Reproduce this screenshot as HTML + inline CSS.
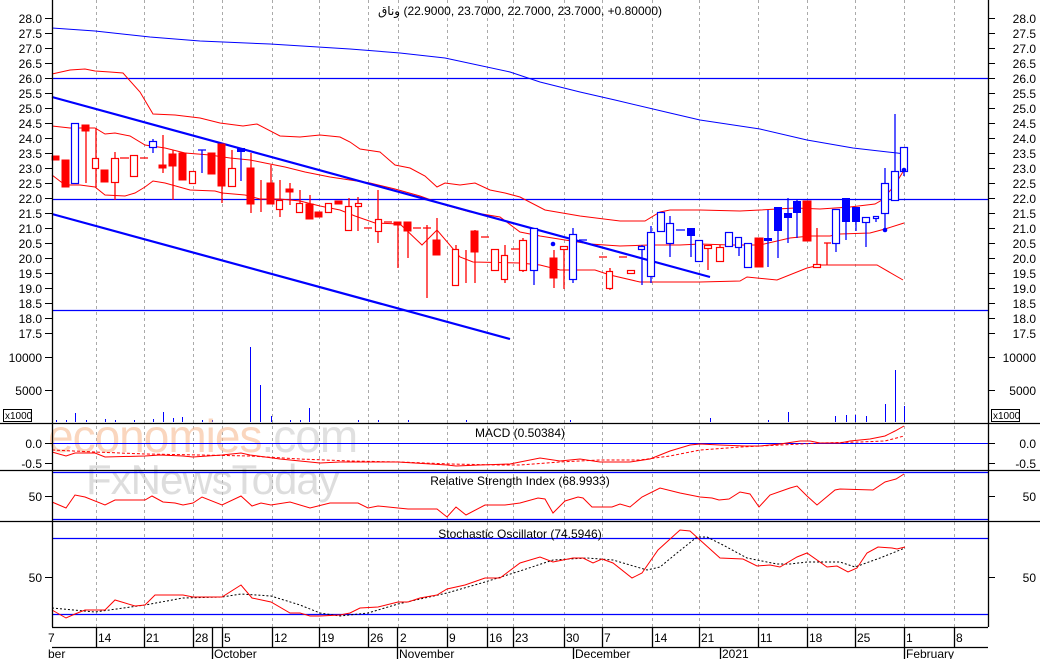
<!DOCTYPE html>
<html><head><meta charset="utf-8"><style>
html,body{margin:0;padding:0;background:#fff;width:1040px;height:659px;overflow:hidden}
svg{display:block}
text{font-family:"Liberation Sans","DejaVu Sans",sans-serif;font-size:12px;fill:#000}
</style></head><body>
<svg width="1040" height="659" viewBox="0 0 1040 659" xmlns="http://www.w3.org/2000/svg">
<!-- grid -->
<g stroke="#aaa" stroke-dasharray="3,3" stroke-width="1">
<path d="M96.5 0V627M144.5 0V627M193.5 0V627M222.5 0V627M272.5 0V627M319.5 0V627M368.5 0V627M398.5 0V627M447.5 0V627M487.5 0V627M513.5 0V627M564.5 0V627M602.5 0V627M652.5 0V627M699.5 0V627M758.5 0V627M807.5 0V627M855.5 0V627M904.5 0V627M954.5 0V627"/>
</g>
<!-- title -->
<text x="520" y="15" text-anchor="middle" direction="ltr">&#x200E;<tspan>وناق</tspan>&#x200E; (22.9000, 23.7000, 22.7000, 23.7000, +0.80000)</text>
<!-- horizontal levels -->
<g stroke="#00f" stroke-width="1.2">
<path d="M52 78.5H988M52 199.5H988M52 310.5H988"/>
</g>
<!-- MA -->
<polyline fill="none" stroke="#00f" stroke-width="1" points="52,28 95,31 150,37 200,41 270,44 350,49 400,53 445,58 510,72 540,82 580,92 615,100 670,113 700,120 760,129 807,140 853,148 897,153 905,154"/>
<!-- bollinger -->
<g fill="none" stroke="#f00" stroke-width="1">
<polyline points="52,74 70,70 85,69 95,71 110,72 123,73 140,92 153,114 175,115 200,118 220,123 243,126 257,124 280,136 300,137 320,135 340,137 350,142 360,149 380,152 395,165 410,168 425,176 437,187 445,183 460,185 475,183 490,190 505,193 520,197 545,210 580,216 620,221 645,221 660,212 670,210 700,210 740,211 760,210 795,208 820,209 850,207 875,204 882,200 895,185 904,170"/>
<polyline points="52,126 70,128 95,128 105,134 115,133 130,136 145,145 165,148 185,153 210,155 230,158 250,160 265,163 285,167 305,172 330,177 350,180 370,183 395,189 420,196 445,205 470,212 500,217 520,232 540,236 565,240 590,244 620,246 650,245 680,245 700,244 730,245 760,245 790,238 810,236 830,236 840,234 870,233 885,229 904,223"/>
<polyline points="52,175 65,185 80,185 95,187 105,195 125,196 135,193 145,187 153,181 165,183 190,190 215,191 222,193 245,195 260,199 280,199 300,201 320,206 340,210 355,216 375,223 400,224 422,245 437,230 460,257 473,262 520,263 540,265 560,270 595,270 610,275 640,282 700,282 740,281 747,277 777,280 807,268 820,265 877,265 903,280"/>
</g>
<!-- channel -->
<g stroke="#00f" stroke-width="2.2">
<path d="M52 97L710 277M52 214L510 339"/>
</g>
<!-- candles: red -->
<g stroke="#f00" stroke-width="1.3" fill="#f00">
<path d="M66 175V187M86 128V183M96 128V187M115 152V200M163 135V173M173 150V200M222 145V203M232 150V185M251 153V213M261 180V212M271 165V203M280 180V217M290 183V205M300 190V205M310 195V218M349 198V225M358 197V231M378 190V243M398 225V268M408 225V258M427 225V298M437 218V248M456 245V277M466 250V283M475 230V283M505 245V283M523 238V272M554 250V288M564 248V289M610 268V290M708 245V270M720 245V262M817 228V268M827 243V265"/>
</g>
<g fill="#f00" stroke="#f00" stroke-width="1">
<rect x="52" y="156" width="7" height="4"/><rect x="62" y="160" width="7" height="27"/><rect x="82" y="125" width="7" height="6"/><rect x="101" y="170" width="7" height="12"/><rect x="159" y="165" width="7" height="3"/><rect x="169" y="154" width="7" height="12"/><rect x="179" y="153" width="7" height="27"/><rect x="208" y="153" width="7" height="21"/><rect x="218" y="144" width="7" height="42"/><rect x="247" y="168" width="7" height="36"/><rect x="267" y="183" width="7" height="21"/><rect x="286" y="189" width="7" height="3"/><rect x="306" y="204" width="7" height="15"/><rect x="315" y="212" width="7" height="5"/><rect x="335" y="201" width="7" height="3"/><rect x="394" y="222" width="7" height="3"/><rect x="404" y="222" width="7" height="9"/><rect x="433" y="240" width="7" height="15"/><rect x="471" y="231" width="7" height="21"/><rect x="550" y="258" width="7" height="20"/><rect x="755" y="238" width="8" height="29"/><rect x="803" y="201" width="8" height="40"/>
</g>
<g fill="#fff" stroke="#f00" stroke-width="1.2">
<rect x="92.5" y="158.5" width="6" height="10"/><rect x="111.5" y="158.5" width="7" height="24"/><rect x="130.5" y="155.5" width="7" height="21"/><rect x="189.5" y="171.5" width="6" height="12"/><rect x="228.5" y="168.5" width="7" height="18"/><rect x="276.5" y="200.5" width="6" height="9"/><rect x="296.5" y="203.5" width="6" height="9"/><rect x="325.5" y="203.5" width="6" height="9"/><rect x="345.5" y="206.5" width="6" height="24"/><rect x="355.5" y="203.5" width="6" height="3"/><rect x="375.5" y="219.5" width="6" height="12"/><rect x="452.5" y="249.5" width="6" height="36"/><rect x="491.5" y="249.5" width="7" height="21"/><rect x="501.5" y="255.5" width="6" height="24"/><rect x="519.5" y="240.5" width="7" height="30"/><rect x="606.5" y="271.5" width="6" height="17"/><rect x="627.5" y="270.5" width="7" height="3"/><rect x="716.5" y="247.5" width="7" height="14"/><rect x="813.5" y="264.5" width="7" height="3"/><rect x="704.5" y="245.5" width="7" height="3"/><rect x="560.5" y="246.5" width="7" height="3"/>
<path d="M120 158H129M140 158H148M364 228H372M384 222H392M413 228H421M423 228H431M481 237H489M511 249H519M599 257H607M619 257H627M824 243H831"/>
</g>
<!-- candles: blue -->
<g stroke="#00f" stroke-width="1.3">
<path d="M153 139V153M202 150V173M241 150V181M534 228V285M573 228V283M642 245V285M651 226V283M670 216V257M691 228V257M699 240V261M739 237V256M748 243V267M768 210V267M778 207V258M788 198V243M797 199V238M836 209V252M846 198V240M856 207V231M866 217V247M876 217V222M885 168V230M895 114V200M904 147V176"/>
</g>
<g fill="#fff" stroke="#00f" stroke-width="1.2">
<rect x="71.5" y="123.5" width="7" height="60"/><rect x="149.5" y="141.5" width="7" height="6"/><rect x="530.5" y="228.5" width="7" height="42"/><rect x="569.5" y="234.5" width="7" height="45"/><rect x="638.5" y="246.5" width="6" height="3"/><rect x="647.5" y="232.5" width="7" height="44"/><rect x="657.5" y="212.5" width="7" height="19"/><rect x="666.5" y="223.5" width="7" height="20"/><rect x="695.5" y="240.5" width="7" height="21"/><rect x="725.5" y="232.5" width="7" height="14"/><rect x="735.5" y="237.5" width="6" height="10"/><rect x="744.5" y="243.5" width="7" height="24"/><rect x="832.5" y="209.5" width="7" height="34"/><rect x="862.5" y="217.5" width="7" height="5"/><rect x="873.5" y="216.5" width="5" height="2"/><rect x="881.5" y="183.5" width="7" height="30"/><rect x="891.5" y="171.5" width="7" height="29"/><rect x="900.5" y="147.5" width="7" height="24"/>
<path d="M198 150H206M579 240H587M676 230H685"/>
</g>
<g fill="#00f">
<rect x="237" y="148" width="8" height="4"/><rect x="687" y="228" width="8" height="8"/><rect x="764" y="238" width="8" height="3"/><rect x="774" y="207" width="8" height="24"/><rect x="784" y="213" width="8" height="5"/><rect x="793" y="201" width="8" height="12"/><rect x="842" y="198" width="8" height="24"/><rect x="852" y="207" width="8" height="15"/>
<circle cx="553" cy="244" r="2.3"/><circle cx="885" cy="230" r="2.3"/><circle cx="904" cy="170" r="2.3"/>
</g>
<!-- volume -->
<g stroke="#00f" stroke-width="1">
<path d="M75.5 422V413M163.5 422V412M182.5 422V417M250.5 422V347M260.5 422V385M271.5 422V416M309.5 422V408M56.5 422V420M66.5 422V420M86.5 422V420M105.5 422V419M115.5 422V420M134.5 422V420M153.5 422V419M173.5 422V418M202.5 422V420M212.5 422V420M290.5 422V420M300.5 422V420M358.5 422V420M378.5 422V420M408.5 422V420M466.5 422V420M570.5 422V420M710.5 422V418M768.5 422V420M788.5 422V412M835.5 422V416M846.5 422V415M855.5 422V415M866.5 422V416M885.5 422V404M895.5 422V370M904.5 422V406"/>
</g>
<!-- watermark -->
<text x="48" y="452" style="font-size:46px;fill:#f7b58a;opacity:.55;letter-spacing:-1px">economies<tspan style="fill:#c8c8c8">.com</tspan></text>
<text x="86" y="494" style="font-size:42px;fill:#bdbdbd;opacity:.5;letter-spacing:-1px">FxNewsToday</text>
<!-- MACD -->
<path d="M52 443.5H988" stroke="#00f" stroke-width="1"/>
<polyline fill="none" stroke="#f00" stroke-width="1" points="52,452 66,456 75,453 95,453 105,457 145,456 160,455 183,456 193,457 222,455 241,453 250,455 280,459 300,461 320,463 340,462 368,462 398,462 447,465 456,466 480,465 510,464 520,462 540,458 560,461 580,459 600,462 630,462 650,459 670,451 690,445 700,444 720,445 745,446 760,446 780,444 800,441 810,441 820,443 840,443 850,441 870,439 885,436 895,431 904,426"/>
<polyline fill="none" stroke="#f00" stroke-width="1" stroke-dasharray="3,2" points="52,450 95,452 145,454 200,455 250,456 300,459 350,461 400,462 450,464 500,465 520,465 560,462 600,460 640,460 670,456 700,450 740,447 780,445 820,443 860,442 885,441 904,436"/>
<text x="520" y="437" text-anchor="middle">MACD (0.50384)</text>
<!-- RSI -->
<path d="M52 472.5H988M52 519.5H988" stroke="#00f" stroke-width="1.2"/>
<polyline fill="none" stroke="#f00" stroke-width="1" points="52,502 66,508 75,495 85,497 105,505 115,500 145,500 152,496 163,502 175,503 183,505 193,503 202,497 222,505 241,496 252,506 261,503 271,505 290,502 310,508 330,503 350,503 358,503 368,508 378,506 398,508 408,509 437,509 447,517 456,507 466,515 485,505 505,505 520,503 538,498 545,499 553,513 565,501 578,497 583,498 592,507 612,507 620,504 630,507 642,497 660,488 680,493 700,497 712,498 719,500 729,499 740,492 750,494 759,507 770,495 790,488 797,486 807,496 817,505 835,490 840,489 873,490 885,482 896,479 904,474"/>
<text x="520" y="485" text-anchor="middle">Relative Strength Index (68.9933)</text>
<!-- Stoch -->
<path d="M52 538.5H988M52 614.5H988" stroke="#00f" stroke-width="1.2"/>
<polyline fill="none" stroke="#000" stroke-width="1" stroke-dasharray="2,2" points="52,608 95,612 145,605 183,598 222,597 241,594 271,596 300,605 320,613 340,616 368,613 398,604 447,593 485,582 520,571 553,560 587,558 613,560 647,570 660,567 677,553 697,537 707,537 723,545 747,558 777,564 790,564 807,562 840,562 855,567 880,558 905,548"/>
<polyline fill="none" stroke="#f00" stroke-width="1" points="52,610 66,618 75,614 85,610 105,610 115,600 135,606 145,605 155,595 183,595 193,597 222,597 241,585 252,598 271,602 290,613 300,613 310,616 320,616 340,615 350,613 360,608 378,607 398,602 408,602 420,598 437,595 447,589 465,585 485,578 500,578 520,563 540,557 553,562 573,558 583,558 593,563 602,559 613,563 632,578 642,573 658,550 680,530 690,531 720,558 743,559 757,566 770,565 780,567 797,557 807,553 827,567 837,566 848,572 857,568 867,553 878,547 892,548 897,549 905,547"/>
<text x="520" y="538" text-anchor="middle">Stochastic Oscillator (74.5946)</text>
<!-- frame -->
<g stroke="#000" stroke-width="1.3" fill="none">
<path d="M52.5 0V627M988.5 0V627M0 423.5H1040M0 470.5H1040M0 521.5H1040M52 627.5H988M52 647.5H988"/>
<path d="M96.5 627V647M144.5 627V647M193.5 627V647M212.5 627V659M222.5 627V647M272.5 627V647M319.5 627V647M368.5 627V647M397.5 627V659M447.5 627V647M487.5 627V647M513.5 627V647M564.5 627V647M573.5 647V659M602.5 627V647M652.5 627V647M699.5 627V647M720.5 647V659M758.5 627V647M807.5 627V647M855.5 627V647M904.5 627V659M954.5 627V647"/>
</g>
<!-- axis ticks -->
<g stroke="#000" stroke-width="1">
<path d="M45 18.5H52M45 33.5H52M45 48.5H52M45 63.5H52M45 78.5H52M45 93.5H52M45 108.5H52M45 123.5H52M45 138.5H52M45 153.5H52M45 168.5H52M45 183.5H52M45 198.5H52M45 213.5H52M45 228.5H52M45 243.5H52M45 258.5H52M45 273.5H52M45 288.5H52M45 303.5H52M45 318.5H52M45 333.5H52M45 357.5H52M45 390.5H52M45 443.5H52M45 463.5H52M45 496.5H52M45 577.5H52"/>
<path d="M988 18.5H995M988 33.5H995M988 48.5H995M988 63.5H995M988 78.5H995M988 93.5H995M988 108.5H995M988 123.5H995M988 138.5H995M988 153.5H995M988 168.5H995M988 183.5H995M988 198.5H995M988 213.5H995M988 228.5H995M988 243.5H995M988 258.5H995M988 273.5H995M988 288.5H995M988 303.5H995M988 318.5H995M988 333.5H995M988 357.5H995M988 390.5H995M988 443.5H995M988 463.5H995M988 496.5H995M988 577.5H995"/>
</g>
<g text-anchor="end">
<text x="42" y="23">28.0</text><text x="42" y="38">27.5</text><text x="42" y="53">27.0</text><text x="42" y="68">26.5</text><text x="42" y="83">26.0</text><text x="42" y="98">25.5</text><text x="42" y="113">25.0</text><text x="42" y="128">24.5</text><text x="42" y="143">24.0</text><text x="42" y="158">23.5</text><text x="42" y="173">23.0</text><text x="42" y="188">22.5</text><text x="42" y="203">22.0</text><text x="42" y="218">21.5</text><text x="42" y="233">21.0</text><text x="42" y="248">20.5</text><text x="42" y="263">20.0</text><text x="42" y="278">19.5</text><text x="42" y="293">19.0</text><text x="42" y="308">18.5</text><text x="42" y="323">18.0</text><text x="42" y="338">17.5</text><text x="42" y="362">10000</text><text x="42" y="395">5000</text><text x="42" y="448">0.0</text><text x="42" y="468">-0.5</text><text x="42" y="501">50</text><text x="42" y="582">50</text>
<text x="1036" y="23">28.0</text><text x="1036" y="38">27.5</text><text x="1036" y="53">27.0</text><text x="1036" y="68">26.5</text><text x="1036" y="83">26.0</text><text x="1036" y="98">25.5</text><text x="1036" y="113">25.0</text><text x="1036" y="128">24.5</text><text x="1036" y="143">24.0</text><text x="1036" y="158">23.5</text><text x="1036" y="173">23.0</text><text x="1036" y="188">22.5</text><text x="1036" y="203">22.0</text><text x="1036" y="218">21.5</text><text x="1036" y="233">21.0</text><text x="1036" y="248">20.5</text><text x="1036" y="263">20.0</text><text x="1036" y="278">19.5</text><text x="1036" y="293">19.0</text><text x="1036" y="308">18.5</text><text x="1036" y="323">18.0</text><text x="1036" y="338">17.5</text><text x="1036" y="362">10000</text><text x="1036" y="395">5000</text><text x="1036" y="448">0.0</text><text x="1036" y="468">-0.5</text><text x="1036" y="501">50</text><text x="1036" y="582">50</text>
</g>
<rect x="3.5" y="409.5" width="28" height="12" fill="#fff" stroke="#000"/><text x="5" y="419" style="font-size:10px">x1000</text>
<rect x="991.5" y="409.5" width="28" height="12" fill="#fff" stroke="#000"/><text x="993" y="419" style="font-size:10px">x1000</text>
<!-- dates -->
<g>
<text x="48" y="642">7</text><text x="98" y="642">14</text><text x="146" y="642">21</text><text x="195" y="642">28</text><text x="224" y="642">5</text><text x="274" y="642">12</text><text x="321" y="642">19</text><text x="370" y="642">26</text><text x="400" y="642">2</text><text x="449" y="642">9</text><text x="489" y="642">16</text><text x="515" y="642">23</text><text x="566" y="642">30</text><text x="604" y="642">7</text><text x="654" y="642">14</text><text x="701" y="642">21</text><text x="760" y="642">11</text><text x="809" y="642">18</text><text x="857" y="642">25</text><text x="906" y="642">1</text><text x="956" y="642">8</text>
<text x="48" y="658">ber</text><text x="214" y="658">October</text><text x="399" y="658">November</text><text x="575" y="658">December</text><text x="722" y="658">2021</text><text x="906" y="658">February</text>
</g>
</svg>
</body></html>
